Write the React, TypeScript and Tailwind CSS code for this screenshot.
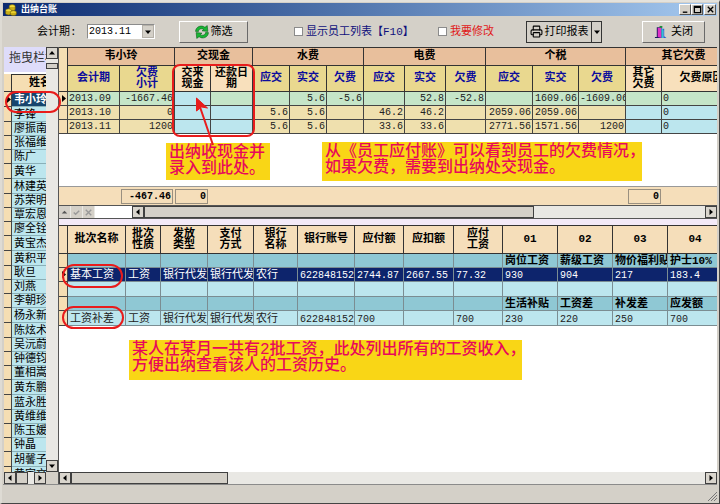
import type { ReactNode } from "react";
import clsx from "clsx";
import { Printer } from "lucide-react";

const employees = [
  "韦小玲", "李锋", "廖振南", "张福维", "陈广", "黄华", "林建英", "苏荣明", "覃宏恩",
  "廖全铨", "黄宝杰", "黄积平", "耿旦", "刘燕", "李朝珍", "杨永新", "陈炫术", "吴沅蔚",
  "钟德钧", "董相嵩", "黄东鹏", "蓝永胜", "黄维维", "陈玉媛", "钟晶", "胡馨子",
];

const ledgerCols = [
  "w-[9px]", "w-[52px]", "w-[55px]", "w-[36px]", "w-[42px]", "w-[37px]", "w-[37px]", "w-[37px]",
  "w-[41px]", "w-[41px]", "w-[40px]", "w-[47px]", "w-[46px]", "w-[47px]", "w-[36px]", "w-[80px]",
];

const ledgerGroups = [
  { title: "韦小玲", span: 2 },
  { title: "交现金", span: 2 },
  { title: "水费", span: 3 },
  { title: "电费", span: 3 },
  { title: "个税", span: 3 },
  { title: "其它欠费", span: 2 },
];

// editable columns get the light wheat header and blue cells
const ledgerHeads = [
  { lines: ["会计期"] },
  { lines: ["欠费", "小计"] },
  { lines: ["交来", "现金"], editable: true },
  { lines: ["还款日", "期"], editable: true },
  { lines: ["应交"] },
  { lines: ["实交"] },
  { lines: ["欠费"] },
  { lines: ["应交"] },
  { lines: ["实交"] },
  { lines: ["欠费"] },
  { lines: ["应交"] },
  { lines: ["实交"] },
  { lines: ["欠费"] },
  { lines: ["其它", "欠费"], editable: true },
  { lines: ["欠费原因"], editable: true },
];

const ledgerRows = [
  ["2013.09", "-1667.46", "", "", "", "5.6", "-5.6", "", "52.8", "-52.8", "", "1609.06", "-1609.06", "", "0"],
  ["2013.10", "0", "", "", "5.6", "5.6", "", "46.2", "46.2", "", "2059.06", "2059.06", "", "", "0"],
  ["2013.11", "1200", "", "", "5.6", "5.6", "", "33.6", "33.6", "", "2771.56", "1571.56", "1200", "", "0"],
];

const batchCols = [
  "w-[9px]", "w-[58px]", "w-[35px]", "w-[47px]", "w-[46px]", "w-[44px]", "w-[57px]",
  "w-[49px]", "w-[50px]", "w-[49px]", "w-[55px]", "w-[55px]", "w-[55px]", "w-[55px]",
];

const batchHeads = [
  ["批次名称"], ["批次", "性质"], ["发放", "类型"], ["支付", "方式"], ["银行", "名称"], ["银行账号"],
  ["应付额"], ["应扣额"], ["应付", "工资"], ["01"], ["02"], ["03"], ["04"],
];

const batchRows = [
  { kind: "band", cells: ["", "", "", "", "", "", "", "", "", "岗位工资", "薪级工资", "物价福利贴", "护士10%"] },
  { kind: "active", cells: ["基本工资", "工资", "银行代发", "银行代发", "农行", "6228481521", "2744.87", "2667.55", "77.32", "930", "904", "217", "183.4"] },
  { kind: "plain", cells: ["", "", "", "", "", "", "", "", "", "", "", "", ""] },
  { kind: "band", cells: ["", "", "", "", "", "", "", "", "", "生活补贴", "工资差", "补发差", "应发额"] },
  { kind: "plain", cells: ["工资补差", "工资", "银行代发", "银行代发", "农行", "6228481521", "700", "", "700", "230", "220", "250", "700"] },
];

const isNumber = (s: string) => /^[-\d.]+$/.test(s);

function Lines({ lines }: { lines: string[] }) {
  return (
    <>
      {lines.map((l) => (
        <span key={l} className="block whitespace-nowrap">{l}</span>
      ))}
    </>
  );
}

function Pointer({ className = "fill-black" }: { className?: string }) {
  return (
    <svg viewBox="0 0 4 7" className={clsx("ml-[3px] h-[7px] w-1", className)}>
      <path d="M0 0L4 3.5L0 7Z" />
    </svg>
  );
}

const arrows = {
  up: "M4 2L7 5.5H1Z",
  down: "M4 6L7 2.5H1Z",
  left: "M2 4L5.5 1V7Z",
  right: "M6 4L2.5 1V7Z",
};

function ScrollButton({ dir, label }: { dir: keyof typeof arrows; label: string }) {
  return (
    <button
      aria-label={label}
      className="flex size-3 shrink-0 items-center justify-center border border-[#404040] bg-[#d9d5cd]"
    >
      <svg viewBox="0 0 8 8" className="size-2"><path d={arrows[dir]} /></svg>
    </button>
  );
}

function HScroll({ thumb }: { thumb: string }) {
  return (
    <div className="flex h-3 min-w-0 flex-1 bg-[#e9e8e4]">
      <ScrollButton dir="left" label="向左" />
      <div className={clsx("border border-[#404040] bg-[#d4d0c8]", thumb)} />
      <div className="flex-1" />
      <ScrollButton dir="right" label="向右" />
    </div>
  );
}

function Note({ className, children }: { className: string; children: ReactNode }) {
  return (
    <p className={clsx("absolute z-10 bg-[#f9d616] px-[3px] text-[16px]/[16px] font-medium whitespace-nowrap text-[#e8095a]", className)}>
      {children}
    </p>
  );
}

function Ring({ className }: { className: string }) {
  return <div className={clsx("pointer-events-none absolute z-10 border-2 border-[#e81c1c]", className)} />;
}

function TitleBar() {
  return (
    <header className="flex h-[13px] shrink-0 items-center gap-1 bg-linear-to-r from-[#0c2a70] to-[#a6caf0] pr-px pl-[2px]">
      <svg viewBox="0 0 20 20" className="size-3">
        <ellipse cx="12" cy="4" rx="5" ry="3" fill="#f3dc3a" stroke="#6b5c08" />
        <path d="M7 5v4c1 3 9 3 10 0V5" fill="#c9ae18" stroke="#6b5c08" />
        <ellipse cx="6" cy="11" rx="5" ry="3" fill="#f3dc3a" stroke="#6b5c08" />
        <path d="M1 12v4c1 3 9 3 10 0v-4" fill="#c9ae18" stroke="#6b5c08" />
        <ellipse cx="14" cy="14" rx="5" ry="3" fill="#e8cf2c" stroke="#6b5c08" />
        <path d="M9 15v2c1 3 9 3 10 0v-2" fill="#c9ae18" stroke="#6b5c08" />
      </svg>
      <h1 className="flex-1 text-[9px]/[12px] font-bold text-white">出纳台账</h1>
      <div className="flex">
        {[
          ["最小化", "M2 8H7"],
          ["最大化", "M1.5 1.5H8.5V8.5H1.5ZM1.5 2.5H8.5"],
          ["关闭窗口", "M2 2L8 8M8 2L2 8"],
        ].map(([label, d]) => (
          <button
            key={label}
            aria-label={label}
            className="flex h-[11px] w-3 items-center justify-center border border-t-white border-r-[#555] border-b-[#555] border-l-white bg-[#d4d0c8] last:ml-px"
          >
            <svg viewBox="0 0 10 10" className="size-[9px] fill-none stroke-black stroke-[1.5]"><path d={d} /></svg>
          </button>
        ))}
      </div>
    </header>
  );
}

function Toolbar() {
  return (
    <div className="flex h-[31px] shrink-0 items-center pr-3 pl-[34px] text-[11px]/[14px] whitespace-nowrap">
      <label htmlFor="period" className="w-[50px]">会计期:</label>
      <div className="relative h-[15px] w-[68px] border border-[#8b8b8b] border-r-white border-b-white bg-white">
        <select id="period" className="block h-[13px] w-full appearance-none bg-transparent pl-px text-[10px]/[13px]">
          <option>2013.11</option>
        </select>
        <span className="pointer-events-none absolute inset-y-0 right-0 flex w-3 items-center justify-center border border-[#b5b1a9] bg-[#d4d0c8]">
          <svg viewBox="0 0 8 8" className="size-2"><path d={arrows.down} /></svg>
        </span>
      </div>
      <button className="ml-6 flex h-[22px] w-[69px] items-center justify-center gap-[2px] border border-t-white border-r-[#6a6a6a] border-b-[#6a6a6a] border-l-white">
        <svg viewBox="0 0 24 24" className="size-[14px] fill-[#19b534] stroke-[#0b5f1a]">
          <path d="M1 11C1 3 11 -1 17 4L21 1L22 11L12 10L15 7.500C11 5 6 7 6 11Z" />
          <path d="M23 13C23 21 13 25 7 20L3 23L2 13L12 14L9 16.500C13 19 18 17 18 13Z" />
        </svg>
        筛选
      </button>
      <label className="ml-[46px] flex items-center gap-[3px] text-[#10107c]">
        <input type="checkbox" className="size-[9px] appearance-none border border-[#8b8b8b] bg-white" />
        显示员工列表【F10】
      </label>
      <label className="ml-auto flex items-center gap-[3px] text-[#e01818]">
        <input type="checkbox" className="size-[9px] appearance-none border border-[#8b8b8b] bg-white" />
        我要修改
      </label>
      <div className="ml-8 flex h-[22px] w-[76px] border border-[#333]">
        <button className="flex flex-1 items-center justify-center gap-[2px]">
          <Printer className="size-[13px]" strokeWidth={2} />
          打印报表
        </button>
        <button aria-label="报表选项" className="flex w-[10px] items-center justify-center border-l border-[#333]">
          <svg viewBox="0 0 8 8" className="size-2"><path d={arrows.down} /></svg>
        </button>
      </div>
      <button className="ml-10 flex h-[22px] w-[63px] items-center justify-center gap-1 border border-t-white border-r-[#6a6a6a] border-b-[#6a6a6a] border-l-white">
        <svg viewBox="0 0 14 15" className="h-[14px] w-[13px]">
          <path d="M1 14V13H3V2.500H8.500V14" fill="#1b1b5e" />
          <path d="M4 3H8V14L4 13Z" fill="#e032c8" />
          <path d="M6 1H9V3H6Z" fill="#1d8a3c" />
          <path d="M8.500 4H11V12L13.500 14H10V6H8.500Z" fill="#2a5fd0" />
          <path d="M8 3V14H10V5Z" fill="#2fc3d8" />
        </svg>
        关闭
      </button>
    </div>
  );
}

function EmployeePane() {
  return (
    <aside className="flex w-[55px] shrink-0 flex-col border-r border-[#555] bg-[#e9e8e4]">
      <div className="flex min-h-0 flex-1">
        <div className="w-[42px] overflow-hidden bg-white">
          <div className="mb-[2px] h-[25px] bg-[#dedcfa] pl-[5px] text-[12px]/[25px] whitespace-nowrap text-[#333]">拖曳栏标</div>
          <table className="w-[66px] table-fixed border-separate border-spacing-0 text-[11px]/[11px]">
            <colgroup>
              <col className="w-2" />
              <col className="w-[58px]" />
            </colgroup>
            <thead>
              <tr className="h-[18px] bg-[#f5deb3]">
                <th className="border-r border-b border-[#333]" />
                <th className="border-t border-b border-[#333] p-0 pr-[2px] font-bold">姓名</th>
              </tr>
            </thead>
            <tbody>
              {employees.map((name, i) => (
                <tr key={name} className={i % 5 < 2 ? "h-[15px]" : "h-[14px]"}>
                  <td className="border-r border-b border-[#444] bg-[#f5deb3] p-0">{i === 0 && <Pointer />}</td>
                  <td
                    className={clsx(
                      "border-b border-[#8ab0b8] p-0 pt-[2px] pl-[2px] whitespace-nowrap",
                      i === 0 ? "bg-[#17456e] font-bold text-white" : "bg-[#bce6ee]",
                    )}
                  >
                    {name}
                  </td>
                </tr>
              ))}
              <tr className="h-[14px]">
                <td className="border-r border-[#444] bg-[#f5deb3] p-0" />
                <td className="bg-[#bce6ee] p-0 pt-[2px] pl-[2px]">黄家文</td>
              </tr>
            </tbody>
          </table>
        </div>
        <div className="flex w-3 flex-col">
          <ScrollButton dir="up" label="向上" />
          <div className="mt-1 h-[6px] border border-[#404040] bg-[#d4d0c8]" />
          <div className="flex-1" />
          <ScrollButton dir="down" label="向下" />
        </div>
      </div>
      <div className="flex h-3">
        <div className="flex w-[42px]"><HScroll thumb="w-3" /></div>
        <div className="w-3 bg-[#d4d0c8]" />
      </div>
    </aside>
  );
}

function LedgerPane() {
  return (
    <section className="relative flex h-[172px] shrink-0 flex-col bg-white">
      <div className="flex-1 overflow-hidden">
        <table className="w-[683px] table-fixed border-separate border-spacing-0 border-t border-[#333] text-[11px]/[11px]">
          <colgroup>
            {ledgerCols.map((w, i) => <col key={i} className={w} />)}
          </colgroup>
          <thead>
            <tr className="h-[18px] bg-[#e8bf9c]">
              <th rowSpan={2} className="border-r border-b border-[#333] bg-[#f5deb3]" />
              {ledgerGroups.map((g) => (
                <th key={g.title} colSpan={g.span} className="border-r border-b border-[#333] p-0 font-bold">{g.title}</th>
              ))}
            </tr>
            <tr className="h-[26px]">
              {ledgerHeads.map((h, i) => (
                <th
                  key={i}
                  className={clsx(
                    "overflow-hidden border-r border-b border-[#333] p-0 font-bold",
                    h.editable ? "bg-[#f8e0bc]" : "bg-[#e9d88f] text-[#0c0c9c]",
                  )}
                >
                  <Lines lines={h.lines} />
                </th>
              ))}
            </tr>
          </thead>
          <tbody className="text-[10px]/[13px] text-[#222]">
            {ledgerRows.map((row, r) => (
              <tr key={row[0]} className="h-[14px]">
                <td className="border-r border-b border-[#444] bg-[#f5deb3] p-0">{r === 0 && <Pointer />}</td>
                {row.map((v, c) => (
                  <td
                    key={c}
                    className={clsx(
                      "overflow-hidden border-r border-b border-[#444] p-0 px-px whitespace-nowrap",
                      c === 0 || c === 14 ? "text-left" : "text-right",
                      r === 0 && c !== 2 ? "bg-[#c5e5c8]" : ledgerHeads[c].editable ? "bg-[#bce6ee]" : "bg-[#efe0ae]",
                    )}
                  >
                    {v}
                  </td>
                ))}
              </tr>
            ))}
          </tbody>
        </table>
      </div>

      <div className="flex h-[19px] shrink-0 items-center gap-[2px] border-t border-[#999] bg-[#f5deba] pr-14 pl-[62px] text-right text-[10px]/[13px] font-bold">
        <output className="h-[15px] w-[52px] border border-[#9a9080] pr-px">-467.46</output>
        <output className="h-[15px] w-[33px] border border-[#9a9080] pr-px">0</output>
        <output className="ml-auto h-[15px] w-[33px] border border-[#9a9080] pr-px">0</output>
      </div>
      <div className="flex h-[14px] shrink-0 items-center border-y border-[#555]">
        <div className="flex w-[73px] self-stretch">
          {[
            ["编辑", "M3 7L6 4L9 7Z", "fill-[#555]"],
            ["保存", "M3 6L5 8L9 4", "fill-none stroke-[#999] stroke-[1.5]"],
            ["取消", "M3 3L9 9M9 3L3 9", "fill-none stroke-[#999] stroke-[1.5]"],
          ].map(([label, d, style]) => (
            <button key={label} aria-label={label} className="h-3 w-3 border-r border-[#e9e8e4] bg-[#d4d0c8]">
              <svg viewBox="0 0 12 12" className={clsx("size-[11px]", style)}><path d={d} /></svg>
            </button>
          ))}
        </div>
        <HScroll thumb="w-[390px]" />
      </div>

      <Ring className="top-[17px] left-[113px] h-[73px] w-[83px] rounded-lg" />
      <svg viewBox="0 0 24 54" className="absolute top-[50px] left-[134px] z-20 h-[54px] w-6 fill-[#e81c1c] stroke-[#e81c1c]">
        <path d="M7 10L20 48" strokeWidth="2" />
        <path d="M3.500 1L14.500 11L8.500 10L3.500 14Z" />
      </svg>
      <Note className="top-24 left-[107px] w-[104px] pt-[2px] pb-[3px]">
        出纳收现金并<br />录入到此处。
      </Note>
      <Note className="top-[95px] left-[263px] w-[320px] pt-[2px] pb-[5px]">
        从《员工应付账》可以看到员工的欠费情况，<br />如果欠费，需要到出纳处交现金。
      </Note>
    </section>
  );
}

function BatchPane() {
  return (
    <section className="relative flex min-h-0 flex-1 flex-col bg-white">
      <div className="min-h-0 flex-1 overflow-hidden">
        <table className="w-[664px] table-fixed border-separate border-spacing-0 border-t border-[#333] text-[11px]/[11px]">
          <colgroup>
            {batchCols.map((w, i) => <col key={i} className={w} />)}
          </colgroup>
          <thead>
            <tr className="h-7 bg-[#f5deba]">
              <th className="border-r border-b border-[#333]" />
              {batchHeads.map((h) => (
                <th key={h.join("")} className="border-r border-b border-[#333] p-0 font-bold"><Lines lines={h} /></th>
              ))}
            </tr>
          </thead>
          <tbody>
            {batchRows.map((row, r) => (
              <tr
                key={r}
                className={clsx(
                  row.kind === "plain" ? "h-[15px]" : "h-[14px]",
                  row.kind === "band" && "bg-[#8fc8d4] font-bold",
                  row.kind === "active" && "bg-[#0d246c] text-white",
                  row.kind === "plain" && "bg-[#bce6ee] text-[#222]",
                )}
              >
                <td className="border-r border-b border-[#444] bg-[#f5deb3] p-0">{row.kind === "active" && <Pointer />}</td>
                {row.cells.map((v, c) => (
                  <td
                    key={c}
                    className={clsx(
                      "overflow-hidden border-r border-b border-[#7b8d92] p-0 pt-[2px] pl-[2px] whitespace-nowrap",
                      isNumber(v) && "text-[10px]",
                    )}
                  >
                    {v}
                  </td>
                ))}
              </tr>
            ))}
          </tbody>
        </table>
      </div>
      <div className="flex h-3 shrink-0"><HScroll thumb="w-[157px]" /></div>

      <Ring className="top-[39px] left-[3px] h-6 w-[61px] rounded-xl" />
      <Ring className="top-[81px] left-[3px] h-[23px] w-[62px] rounded-xl" />
      <Note className="top-[115px] left-[70px] w-[393px] pt-[2px] pb-[6px]">
        某人在某月一共有2批工资，此处列出所有的工资收入，<br />方便出纳查看该人的工资历史。
      </Note>
    </section>
  );
}

export default function App() {
  return (
    <div className="flex h-screen flex-col overflow-hidden border-t-2 border-r border-b border-l-2 border-t-[#e4e2dc] border-r-[#444] border-b-[#444] border-l-[#dedbd4] bg-[#d4d0c8] pt-px pr-[2px] pb-[2px] pl-px font-['Liberation_Mono','Noto_Sans_CJK_SC',monospace] text-black">
      <TitleBar />
      <Toolbar />
      <main className="relative ml-px flex min-h-0 flex-1">
        <EmployeePane />
        <div className="flex min-w-0 flex-1 flex-col">
          <LedgerPane />
          <div className="h-[6px] shrink-0 bg-[#f3eaf8]" />
          <BatchPane />
        </div>
        <Ring className="top-11 left-px h-[22px] w-[56px] rounded-xl" />
      </main>
      <footer className="flex h-[17px] shrink-0 items-end justify-end border-t border-[#8b8b8b]">
        <svg viewBox="0 0 10 10" className="size-[10px] stroke-[#777]">
          <path d="M1 10L10 1M4 10L10 4M7 10L10 7" />
        </svg>
      </footer>
    </div>
  );
}
